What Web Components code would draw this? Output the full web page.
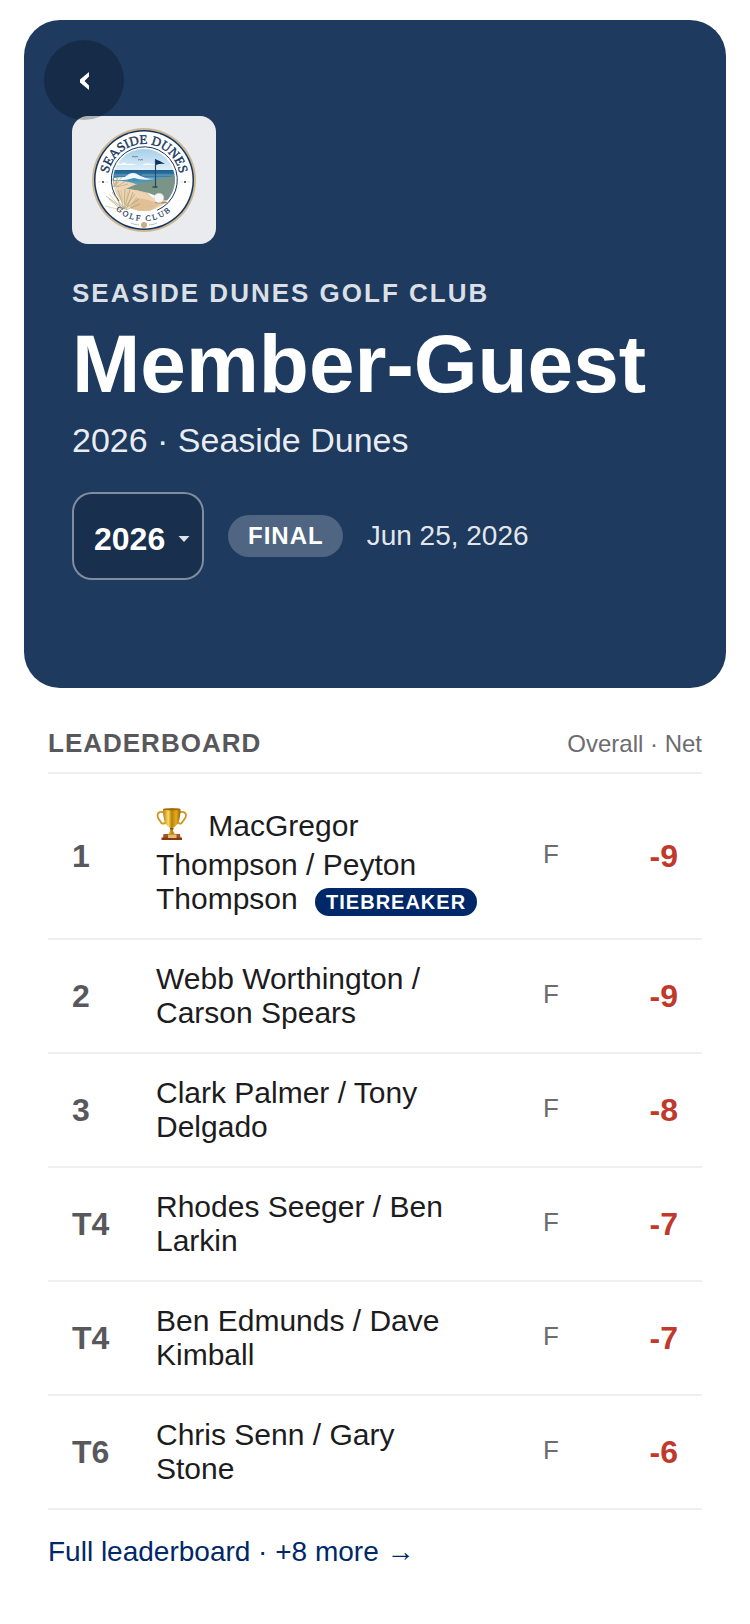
<!DOCTYPE html>
<html lang="en">
<head>
<meta charset="utf-8">
<meta name="viewport" content="width=device-width, initial-scale=1">
<title>Member-Guest</title>
<style>
  body {
    margin: 0;
    padding: 20px 24px;
    background: #fff;
    color: #1c1c1e;
    font-family: "Liberation Sans", Arial, sans-serif;
  }
</style>
</head>
<body>
<event-hero>
  <club-logo slot="logo"></club-logo>
  <span slot="club">Seaside Dunes Golf Club</span>
  <span slot="title">Member-Guest</span>
  <span slot="venue">2026 · Seaside Dunes</span>
  <year-select slot="meta"></year-select>
  <status-pill slot="meta">FINAL</status-pill>
  <span slot="meta">Jun 25, 2026</span>
</event-hero>
<leader-board>
  <span slot="heading">Leaderboard</span>
  <span slot="mode">Overall · Net</span>
  <span slot="more">Full leaderboard · +8 more →</span>
</leader-board>

<script>
class ClubLogo extends HTMLElement {
  constructor() {
    super();
    this.attachShadow({ mode: "open" });
  }

  connectedCallback() {
    this.shadowRoot.innerHTML = `
      <style>
        :host {
          display: block;
          width: 104px;
          padding: 12px 20px;
          border-radius: 16px;
          background: rgba(255, 255, 255, 0.9);
        }
        svg { display: block; width: 104px; height: 104px; }
        text {
          font-family: "Liberation Serif", "Times New Roman", serif;
          fill: #17375e;
          stroke: #17375e;
        }
      </style>
      <svg viewBox="0 0 104 104" role="img" aria-label="Seaside Dunes Golf Club logo">
        <defs>
          <clipPath id="scene"><circle cx="52" cy="52" r="31"/></clipPath>
          <linearGradient id="sky" x1="0" y1="0" x2="0" y2="1">
            <stop offset="0" stop-color="#a3cdea"/><stop offset="1" stop-color="#e4f2fa"/>
          </linearGradient>
          <linearGradient id="sea" x1="0" y1="0" x2="0" y2="1">
            <stop offset="0" stop-color="#1f5f8f"/><stop offset="1" stop-color="#5ba3c4"/>
          </linearGradient>
          <linearGradient id="sand" x1="0" y1="0" x2="1" y2="1">
            <stop offset="0" stop-color="#f0dcc0"/><stop offset="1" stop-color="#dfbf96"/>
          </linearGradient>
          <path id="top" d="M16 52 A36 36 0 0 1 88 52"/>
          <path id="bottom" d="M11 52 A41 41 0 0 0 93 52"/>
        </defs>
        <circle cx="52" cy="52" r="52" fill="#cdb896"/>
        <circle cx="52" cy="52" r="50" fill="#17375e"/>
        <circle cx="52" cy="52" r="48.500" fill="#fff"/>
        <path d="M27 73A33 33 0 1 1 65 82.300" fill="none" stroke="#17375e" stroke-width="1"/>
        <g clip-path="url(#scene)">
          <rect x="20" y="20" width="64" height="24" fill="url(#sky)"/>
          <path d="M21 37q4-3 8-1q3-3 6 0q5-1 9 1zM50 37q5-3 9-1q4-1 9 1z" fill="#fff"/>
          <rect x="20" y="42" width="64" height="14" fill="url(#sea)"/>
          <path d="M22 50q6-1 11-1q6-6 12-3q7 5 19 5q-14 2-22-1q-10 3-20 2z" fill="#eef8fb"/>
          <path d="M20 47h16M50 47h32M54 50h28" stroke="#8dc6dd" stroke-width=".6"/>
          <path d="M20 53q14-1 26 4l14 12v20H20z" fill="url(#sand)"/>
          <path d="M34 61q10-6 22-7q14-5 28-6v20q-6 4-12 5q-12-10-38-12z" fill="#7a9588"/>
          <path d="M20 63q22-5 35 4q9 5 24 6q-5 12-20 12H20z" fill="#edd5b4"/>
          <path d="M44 70q13 1 24 6l-12 9H34z" fill="#dfc097"/>
        </g>
        <path d="M40 29q2-1.500 3 0q2-1 3 0M46 32q2-1 2.500 0q1.500-1 2.500 0" fill="none" stroke="#385b78" stroke-width=".7"/>
        <!-- dune grass -->
        <path d="M21 59L26 50M22 59L30 49M23 59L20 50M24 59L34 53M24 59L25 49M25 59L36 56" stroke="#b0a173" stroke-width=".6"/>
        <path d="M32 81L14 68M32 81L20 64M32 81L26 62M32 81L33 61M32 81L38 62M32 81L43 66M32 81L47 71M30 82L17 71M34 82L41 64M30 82L23 66M34 82L48 76" fill="none" stroke="#a39566" stroke-width=".6"/>
        <path d="M31 82L17 66M31 82L29 62M33 82L36 63M34 82L45 69M29 82L13 78" fill="none" stroke="#c9b98c" stroke-width=".6"/>
        <ellipse cx="63" cy="59" rx="3" ry="1" fill="#35594f"/>
        <path d="M63.500 31v28" stroke="#24496a" stroke-width="1.200"/>
        <path d="M64 31.500q4 1 9 4.500q-4-1-9 1z" fill="#12305a"/>
        <ellipse cx="69" cy="74.500" rx="6" ry="1" fill="#a98a62"/>
        <circle cx="67" cy="70" r="4.800" fill="#f6f6f4" stroke="#cfd1d0" stroke-width=".5"/>
        <text font-size="13" stroke-width=".4"><textPath href="#top" startOffset="50%" text-anchor="middle">SEASIDE DUNES</textPath></text>
        <text font-size="8" stroke-width=".2" letter-spacing="2"><textPath href="#bottom" startOffset="50%" text-anchor="middle">GOLF CLUB</textPath></text>
        <circle cx="11" cy="54" r="1" fill="#17375e"/>
        <circle cx="93" cy="54" r="1" fill="#17375e"/>
        <path d="M6 54h3M13 54h3M88 54h3M95 54h3" stroke="#d8c8ac" stroke-width=".6"/>
        <circle cx="52" cy="97" r="3" fill="#c9ad84"/>
        <path d="M39 95q4 2 8 2M65 95q-4 2-8 2" fill="none" stroke="#8297ad" stroke-width=".6"/>
      </svg>
    `;
  }
}
customElements.define("club-logo", ClubLogo);

class YearSelect extends HTMLElement {
  constructor() {
    super();
    this.attachShadow({ mode: "open" });
  }

  connectedCallback() {
    this.shadowRoot.innerHTML = `
      <style>
        :host { display: inline-grid; align-items: center; }
        select, svg { grid-area: 1 / 1; }
        select {
          appearance: none;
          box-sizing: border-box;
          width: 132px;
          height: 88px;
          margin: 0;
          padding: 6px 36px 0 20px;
          border: 2px solid rgba(255, 255, 255, 0.45);
          border-radius: 20px;
          background: rgba(0, 0, 0, 0.18);
          color: #fff;
          font: bold 32px "Liberation Sans", Arial, sans-serif;
        }
        option { color: #1c1c1e; }
        svg {
          justify-self: end;
          width: 12px;
          height: 6px;
          margin-top: 6px;
          margin-right: 14px;
          pointer-events: none;
        }
      </style>
      <select aria-label="Year">
        <option selected>2026</option>
      </select>
      <svg viewBox="0 0 12 6" aria-hidden="true"><path d="M.5 0h11L6 6z" fill="#dfe3e9"/></svg>
    `;
  }
}
customElements.define("year-select", YearSelect);

class StatusPill extends HTMLElement {
  constructor() {
    super();
    this.attachShadow({ mode: "open" });
  }

  connectedCallback() {
    this.shadowRoot.innerHTML = `
      <style>
        :host {
          display: inline-block;
          padding: 7px 19px 7px 20px;
          border-radius: 21px;
          background: rgba(255, 255, 255, 0.22);
          color: #fff;
          font-size: 24px;
          font-weight: bold;
          line-height: 28px;
          letter-spacing: 1px;
        }
      </style>
      <slot></slot>
    `;
  }
}
customElements.define("status-pill", StatusPill);

class EventHero extends HTMLElement {
  constructor() {
    super();
    this.attachShadow({ mode: "open" });
  }

  connectedCallback() {
    this.shadowRoot.innerHTML = `
      <style>
        :host {
          display: block;
          position: relative;
          padding: 96px 48px 108px;
          border-radius: 36px;
          background: #1e3a5f;
          color: #fff;
        }
        .back {
          position: absolute;
          top: 20px;
          left: 20px;
          display: grid;
          place-items: center;
          width: 80px;
          height: 80px;
          padding: 2px 0 0;
          border: 0;
          border-radius: 50%;
          background: rgba(0, 0, 0, 0.25);
          cursor: pointer;
        }
        .back svg { width: 9px; height: 18px; }
        .logo { display: flex; }
        .club {
          margin: 34px 0 0;
          color: rgba(255, 255, 255, 0.85);
          font-size: 26px;
          font-weight: bold;
          line-height: 30px;
          letter-spacing: 2px;
          text-transform: uppercase;
        }
        h1 {
          margin: 12px 0;
          font-size: 82px;
          line-height: 88px;
        }
        .venue {
          margin: 0;
          color: rgba(255, 255, 255, 0.92);
          font-size: 34px;
          line-height: 40px;
        }
        .meta {
          display: flex;
          flex-wrap: wrap;
          align-items: center;
          gap: 24px;
          margin-top: 32px;
          color: rgba(255, 255, 255, 0.9);
          font-size: 28px;
          line-height: 32px;
        }
      </style>
      <div class="logo"><slot name="logo"></slot></div>
      <p class="club"><slot name="club"></slot></p>
      <h1><slot name="title"></slot></h1>
      <p class="venue"><slot name="venue"></slot></p>
      <div class="meta"><slot name="meta"></slot></div>
      <button class="back" type="button" aria-label="Back">
        <svg viewBox="0 0 9 18"><path d="M9 0v4.500L4.500 9L9 13.500V18L0 10.500V7.500z" fill="#fff"/></svg>
      </button>
    `;
  }
}
customElements.define("event-hero", EventHero);

class TrophyIcon extends HTMLElement {
  constructor() {
    super();
    this.attachShadow({ mode: "open" });
  }

  connectedCallback() {
    this.shadowRoot.innerHTML = `
      <style>
        :host {
          display: inline-block;
          padding: 12px 0 8px;
          margin-right: 12px;
          vertical-align: -12px;
        }
        svg { display: block; width: 32px; height: 32px; }
      </style>
      <svg viewBox="0 0 32 32" role="img" aria-label="Winner">
        <defs>
          <linearGradient id="gold">
            <stop offset="0" stop-color="#b97a08"/>
            <stop offset=".3" stop-color="#f9dc62"/>
            <stop offset=".5" stop-color="#b8800c"/>
            <stop offset=".75" stop-color="#e6ab1c"/>
            <stop offset="1" stop-color="#946006"/>
          </linearGradient>
        </defs>
        <path d="M8 4.500C5 3 1.500 4 1.500 7.500C1.500 11 4 12 5 14.500C6 16.500 8.500 15.500 9.500 14.500M23 4.500C26 3 30 4 30 7.500C30 11 27 12 26 14.500C25 16.500 23 15.500 22 14.500" fill="none" stroke="#cf971c" stroke-width="1.800"/>
        <path d="M7 1q9-1.500 17.500 0q0 14-5 17l-2.500 2v3l2.500 4h-8l2.500-4v-3l-2.500-2Q7 15 7 1z" fill="url(#gold)"/>
        <ellipse cx="15.700" cy="1.300" rx="8.700" ry="1.100" fill="#a16a08"/>
        <path d="M14 20h3.500v1.500H14z" fill="#7e5107"/>
        <path d="M7.500 26h16.500l.5 4H7z" fill="#a95420"/>
        <path d="M5.500 29.500h20.500V32H5.500z" fill="#843a12"/>
        <path d="M12 26.500h8.500v3.500H12z" fill="#e4bd6c"/>
      </svg>
    `;
  }
}
customElements.define("trophy-icon", TrophyIcon);

class ResultTag extends HTMLElement {
  constructor() {
    super();
    this.attachShadow({ mode: "open" });
  }

  connectedCallback() {
    this.shadowRoot.innerHTML = `
      <style>
        :host {
          display: inline-block;
          margin-left: 9px;
          padding: 2px 11px;
          border-radius: 14px;
          background: #002868;
          color: #fff;
          font-size: 20px;
          font-weight: bold;
          line-height: 24px;
          letter-spacing: 1px;
        }
      </style>
      <slot></slot>
    `;
  }
}
customElements.define("result-tag", ResultTag);

const results = [
  { pos: "1", names: "MacGregor Thompson / Peyton Thompson", thru: "F", score: "-9", winner: true, tag: "TIEBREAKER" },
  { pos: "2", names: "Webb Worthington / Carson Spears", thru: "F", score: "-9" },
  { pos: "3", names: "Clark Palmer / Tony Delgado", thru: "F", score: "-8" },
  { pos: "T4", names: "Rhodes Seeger / Ben Larkin", thru: "F", score: "-7" },
  { pos: "T4", names: "Ben Edmunds / Dave Kimball", thru: "F", score: "-7" },
  { pos: "T6", names: "Chris Senn / Gary Stone", thru: "F", score: "-6" },
];

class LeaderBoard extends HTMLElement {
  constructor() {
    super();
    this.attachShadow({ mode: "open" });
  }

  connectedCallback() {
    this.render();
  }

  row(item) {
    const trophy = item.winner ? "<trophy-icon></trophy-icon> " : "";
    const tag = item.tag ? ` <result-tag>${item.tag}</result-tag>` : "";
    return `
      <tr>
        <td class="pos">${item.pos}</td>
        <td class="names">${trophy}${item.names}${tag}</td>
        <td class="thru">${item.thru}</td>
        <td class="score">${item.score}</td>
      </tr>`;
  }

  render() {
    this.shadowRoot.innerHTML = `
      <style>
        :host { display: block; padding: 40px 24px 0; }
        header {
          display: flex;
          justify-content: space-between;
          align-items: baseline;
          padding-bottom: 13px;
          border-bottom: 2px solid #eeeef3;
        }
        h2 {
          margin: 0;
          color: #58585c;
          font-size: 26px;
          line-height: 30px;
          letter-spacing: 1px;
          text-transform: uppercase;
        }
        .mode { color: #6c6c70; font-size: 24px; line-height: 30px; }
        table {
          width: 100%;
          table-layout: fixed;
          border-collapse: separate;
          border-spacing: 0;
        }
        td {
          padding: 22px 0;
          border-bottom: 2px solid #eeeef3;
          line-height: 34px;
          vertical-align: middle;
        }
        .pos {
          width: 84px;
          padding-left: 24px;
          color: #58585c;
          font-size: 32px;
          font-weight: bold;
        }
        .names { font-size: 30px; }
        .thru {
          width: 142px;
          padding: 20px 0 24px;
          color: #6c6c70;
          font-size: 26px;
          text-align: center;
        }
        .score {
          width: 56px;
          padding-right: 24px;
          color: #c0392b;
          font-size: 32px;
          font-weight: bold;
          text-align: right;
        }
        a {
          display: inline-block;
          margin-top: 26px;
          color: #002868;
          font-size: 28px;
          line-height: 32px;
          text-decoration: none;
        }
      </style>
      <header>
        <h2><slot name="heading"></slot></h2>
        <span class="mode"><slot name="mode"></slot></span>
      </header>
      <table aria-label="Leaderboard">
        <tbody>${results.map((item) => this.row(item)).join("")}</tbody>
      </table>
      <a href="#leaderboard"><slot name="more"></slot></a>
    `;
  }
}
customElements.define("leader-board", LeaderBoard);
</script>
</body>
</html>
